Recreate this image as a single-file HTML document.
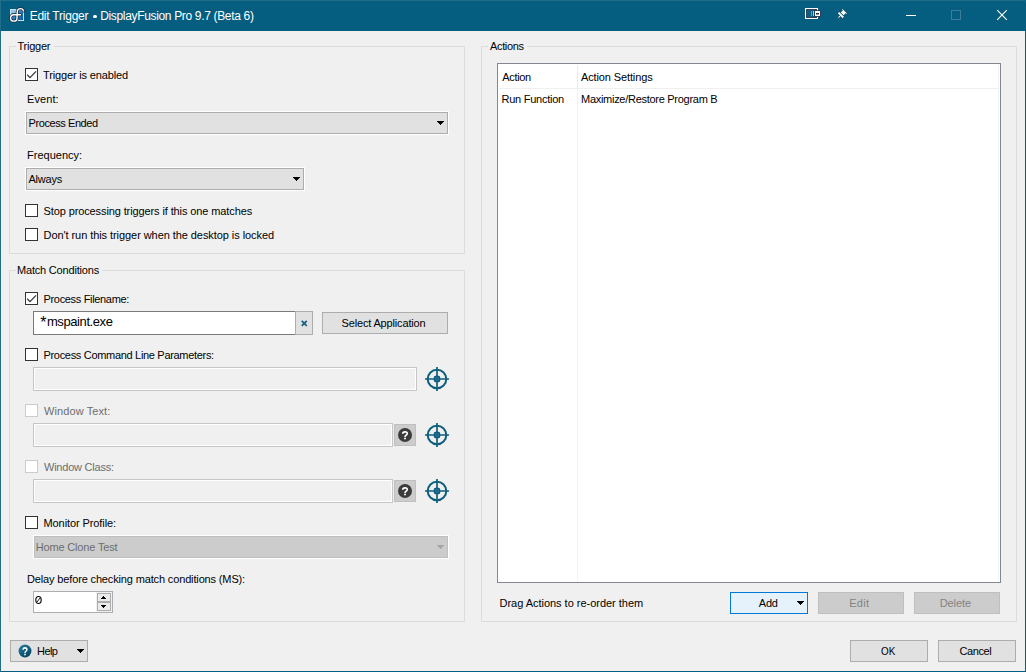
<!DOCTYPE html>
<html><head><meta charset="utf-8"><title>Edit Trigger</title>
<style>
*{box-sizing:border-box;margin:0;padding:0}
html,body{width:1026px;height:672px;overflow:hidden;background:#f0f0f0}
body{position:relative;font-family:"Liberation Sans",sans-serif;font-size:11px;color:#000;line-height:13px}
.a{position:absolute}
.t{position:absolute;white-space:pre;line-height:13px;height:13px}
.grp{position:absolute;border:1px solid #dcdcdc}
.gl{position:absolute;background:#f0f0f0;height:3px}
.cb{position:absolute;width:13px;height:13px;border:1px solid #333;background:#fff}
.cb.d{border-color:#cccccc;background:#fff}
.dd{position:absolute;border:1px solid #fff}
.dd>i{position:absolute;left:0;top:0;right:0;bottom:0;border:1px solid #adadad;background:#e1e1e1}
.dd.d>i{border-color:#bfbfbf;background:#cccccc}
.btn{position:absolute;border:1px solid #adadad;background:#e1e1e1}
.btn.d{border-color:#bfbfbf;background:#cccccc}
.btn.f{border-color:#0078d7;background:#e5f1fb}
.inp{position:absolute;border:1px solid #7a7a7a;background:#fff}
.inp.d{border:1px solid #c6c6c6;background:#f0f0f0;box-shadow:inset 0 0 0 1px #fff}
svg{position:absolute;overflow:visible}
</style></head>
<body>
<div class="a" style="left:0;top:0;width:1026px;height:31px;background:#055e80"></div>
<div class="a" style="left:0;top:0;width:1026px;height:1px;background:#1f6e8a"></div>
<div class="a" style="left:0;top:0;width:1px;height:671px;background:#1f6e8a"></div>
<div class="a" style="left:1025px;top:0;width:1px;height:672px;background:#055e80"></div>
<div class="a" style="left:0;top:671px;width:1026px;height:1px;background:#055e80"></div>
<div class="a" style="left:93.0px;top:14.8px;width:3.6px;height:3.6px;border-radius:50%;background:#fff"></div>
<div class="grp" style="left:9px;top:46px;width:456px;height:208px"></div>
<div class="gl" style="left:16px;top:45px;width:38px"></div>
<div class="grp" style="left:9px;top:270px;width:456px;height:352px"></div>
<div class="gl" style="left:16px;top:269px;width:86px"></div>
<div class="grp" style="left:481px;top:46px;width:536px;height:576px"></div>
<div class="gl" style="left:488px;top:45px;width:39px"></div>
<div class="cb" style="left:25px;top:68px"><svg width="13" height="13" viewBox="0 0 13 13" style="left:-1px;top:-1px"><path d="M2.2 6.8 L5 9.6 L11 3.4" fill="none" stroke="#333" stroke-width="1.25"/></svg></div>
<div class="cb" style="left:25px;top:204px"></div>
<div class="cb" style="left:25px;top:228px"></div>
<div class="cb" style="left:25px;top:292px"><svg width="13" height="13" viewBox="0 0 13 13" style="left:-1px;top:-1px"><path d="M2.2 6.8 L5 9.6 L11 3.4" fill="none" stroke="#333" stroke-width="1.25"/></svg></div>
<div class="cb" style="left:25px;top:348px"></div>
<div class="cb d" style="left:25px;top:404px"></div>
<div class="cb d" style="left:25px;top:460px"></div>
<div class="cb" style="left:25px;top:516px"></div>
<div class="dd" style="left:25px;top:111px;width:424px;height:24px"><i></i></div>
<svg width="7" height="4" style="left:437px;top:121px" shape-rendering="crispEdges"><path d="M0 0h7v1h-1v1h-1v1h-1v1h-1v-1h-1v-1h-1v-1h-1z" fill="#000"/></svg>
<div class="dd" style="left:25px;top:167px;width:280px;height:24px"><i></i></div>
<svg width="7" height="4" style="left:293px;top:177px" shape-rendering="crispEdges"><path d="M0 0h7v1h-1v1h-1v1h-1v1h-1v-1h-1v-1h-1v-1h-1z" fill="#000"/></svg>
<div class="dd d" style="left:33px;top:535px;width:416px;height:24px"><i></i></div>
<svg width="7" height="4" style="left:437px;top:545px" shape-rendering="crispEdges"><path d="M0 0h7v1h-1v1h-1v1h-1v1h-1v-1h-1v-1h-1v-1h-1z" fill="#a6a6a6"/></svg>
<div class="inp" style="left:33px;top:311px;width:263px;height:24px"></div>
<div class="btn" style="left:295px;top:311px;width:18px;height:24px"></div>
<svg width="7" height="7" viewBox="0 0 7 7" style="left:301px;top:320px"><path d="M0.75 0.8 L5.75 5.8 M5.75 0.8 L0.75 5.8" stroke="#1a5f80" stroke-width="1.75" fill="none"/></svg>
<div class="btn" style="left:322px;top:312px;width:126px;height:22px"></div>
<div class="inp d" style="left:33px;top:367px;width:384px;height:24px"></div>
<div class="inp d" style="left:33px;top:423px;width:360px;height:24px"></div>
<div class="inp d" style="left:33px;top:479px;width:360px;height:24px"></div>
<div class="btn d" style="left:394px;top:424px;width:22px;height:22px"></div>
<svg width="14" height="14" viewBox="0 0 14 14" style="left:398px;top:428px"><circle cx="7" cy="7" r="7" fill="#3c3c3c"/><path d="M4.75 5.7 C4.75 3.3 9.25 3.3 9.25 5.6 C9.25 7.2 7 7.1 7 8.9" fill="none" stroke="#fff" stroke-width="1.7"/><circle cx="7" cy="10.55" r="0.95" fill="#fff"/></svg>
<div class="btn d" style="left:394px;top:480px;width:22px;height:22px"></div>
<svg width="14" height="14" viewBox="0 0 14 14" style="left:398px;top:484px"><circle cx="7" cy="7" r="7" fill="#3c3c3c"/><path d="M4.75 5.7 C4.75 3.3 9.25 3.3 9.25 5.6 C9.25 7.2 7 7.1 7 8.9" fill="none" stroke="#fff" stroke-width="1.7"/><circle cx="7" cy="10.55" r="0.95" fill="#fff"/></svg>
<svg width="24" height="24" viewBox="0 0 24 24" style="left:425px;top:367px"><g fill="none" stroke="#0f5e7e" stroke-width="2"><circle cx="12" cy="12" r="9.3"/><path d="M0 12H24M12 0V24" stroke-width="1.7"/></g><rect x="8.8" y="8.8" width="6.4" height="6.4" rx="1.6" fill="#0f5e7e"/><rect x="10.4" y="10.4" width="3.2" height="3.2" fill="#3f86a3"/><path d="M12 10V14M10 12H14" stroke="#0f5e7e" stroke-width="0.9"/></svg>
<svg width="24" height="24" viewBox="0 0 24 24" style="left:425px;top:423px"><g fill="none" stroke="#0f5e7e" stroke-width="2"><circle cx="12" cy="12" r="9.3"/><path d="M0 12H24M12 0V24" stroke-width="1.7"/></g><rect x="8.8" y="8.8" width="6.4" height="6.4" rx="1.6" fill="#0f5e7e"/><rect x="10.4" y="10.4" width="3.2" height="3.2" fill="#3f86a3"/><path d="M12 10V14M10 12H14" stroke="#0f5e7e" stroke-width="0.9"/></svg>
<svg width="24" height="24" viewBox="0 0 24 24" style="left:425px;top:479px"><g fill="none" stroke="#0f5e7e" stroke-width="2"><circle cx="12" cy="12" r="9.3"/><path d="M0 12H24M12 0V24" stroke-width="1.7"/></g><rect x="8.8" y="8.8" width="6.4" height="6.4" rx="1.6" fill="#0f5e7e"/><rect x="10.4" y="10.4" width="3.2" height="3.2" fill="#3f86a3"/><path d="M12 10V14M10 12H14" stroke="#0f5e7e" stroke-width="0.9"/></svg>
<div class="inp"  style="border-color:#abadb3;left:33px;top:591px;width:80px;height:22px"></div>
<svg width="8" height="10" viewBox="34 595 8 10" style="left:34px;top:595px"><g fill="none" stroke="#000" stroke-width="1.1"><ellipse cx="38.5" cy="600" rx="2.7" ry="3.5"/><path d="M36.6 602.4 L40.4 597.6" stroke-width="0.9"/></g></svg>
<div class="a" style="left:96px;top:592px;width:16px;height:20px;background:#f0f0f0"></div>
<div class="btn" style="background:#ebebeb;left:97px;top:593px;width:14px;height:9px"></div>
<div class="btn" style="background:#ebebeb;left:97px;top:602px;width:14px;height:9px"></div>
<svg width="5" height="3" style="left:101px;top:596px" shape-rendering="crispEdges"><path d="M2 0h1v1h1v1h1v1h-5v-1h1v-1h1z" fill="#000"/></svg>
<svg width="5" height="3" style="left:101px;top:605px" shape-rendering="crispEdges"><path d="M0 0h5v1h-1v1h-1v1h-1v-1h-1v-1h-1z" fill="#000"/></svg>
<div class="btn" style="left:10px;top:640px;width:78px;height:22px"></div>
<svg width="14" height="14" viewBox="0 0 14 14" style="left:18px;top:644px"><defs><linearGradient id="hg" x1="0.2" y1="0" x2="0.8" y2="1"><stop offset="0" stop-color="#2b7c9e"/><stop offset="0.55" stop-color="#0f5a7a"/><stop offset="1" stop-color="#083f58"/></linearGradient></defs><circle cx="7" cy="7" r="6.45" fill="url(#hg)"/><g transform="translate(7 0) scale(0.86 1) translate(-7 0)"><path d="M4.75 5.7 C4.75 3.3 9.25 3.3 9.25 5.6 C9.25 7.2 7 7.1 7 8.9" fill="none" stroke="#fff" stroke-width="1.65"/><circle cx="7" cy="10.55" r="0.95" fill="#fff"/></g></svg>
<svg width="7" height="4" style="left:77px;top:649px" shape-rendering="crispEdges"><path d="M0 0h7v1h-1v1h-1v1h-1v1h-1v-1h-1v-1h-1v-1h-1z" fill="#000"/></svg>
<div class="a" style="left:497px;top:63px;width:504px;height:520px;border:1px solid #828790;background:#fff"></div>
<div class="a" style="left:499px;top:88px;width:500px;height:1px;background:#efefef"></div>
<div class="a" style="left:577px;top:65px;width:1px;height:23px;background:#ebebeb"></div>
<div class="a" style="left:998px;top:65px;width:1px;height:23px;background:#f1f1f1"></div>
<div class="a" style="left:998px;top:89px;width:1px;height:492px;background:#f0f5fd"></div>
<div class="a" style="left:577px;top:89px;width:1px;height:492px;background:#edf3fc"></div>
<div class="btn f" style="left:730px;top:592px;width:78px;height:22px"></div>
<svg width="7" height="4" style="left:797px;top:601px" shape-rendering="crispEdges"><path d="M0 0h7v1h-1v1h-1v1h-1v1h-1v-1h-1v-1h-1v-1h-1z" fill="#000"/></svg>
<div class="btn d" style="left:818px;top:592px;width:86px;height:22px"></div>
<div class="btn d" style="left:914px;top:592px;width:86px;height:22px"></div>
<div class="btn" style="left:850px;top:640px;width:78px;height:22px"></div>
<div class="btn" style="left:938px;top:640px;width:78px;height:22px"></div>
<span class="t" style="left:29.65px;top:10px;font-size:12px;letter-spacing:-0.224px;color:#fff;">Edit Trigger</span>
<span class="t" style="left:100.15px;top:10px;font-size:12px;letter-spacing:-0.333px;color:#fff;">DisplayFusion Pro 9.7 (Beta 6)</span>
<span class="t" style="left:17.50px;top:40px;font-size:11px;letter-spacing:-0.255px;color:#000;">Trigger</span>
<span class="t" style="left:17.00px;top:264px;font-size:11px;letter-spacing:-0.190px;color:#000;">Match Conditions</span>
<span class="t" style="left:490.00px;top:40px;font-size:11px;letter-spacing:-0.340px;color:#000;">Actions</span>
<span class="t" style="left:43.00px;top:69px;font-size:11px;letter-spacing:-0.147px;color:#000;">Trigger is enabled</span>
<span class="t" style="left:27.00px;top:93px;font-size:11px;letter-spacing:0.092px;color:#000;">Event:</span>
<span class="t" style="left:28.50px;top:117px;font-size:11px;letter-spacing:-0.413px;color:#000;">Process Ended</span>
<span class="t" style="left:27.00px;top:149px;font-size:11px;letter-spacing:0.013px;color:#000;">Frequency:</span>
<span class="t" style="left:28.50px;top:173px;font-size:11px;letter-spacing:-0.239px;color:#000;">Always</span>
<span class="t" style="left:43.50px;top:205px;font-size:11px;letter-spacing:-0.110px;color:#000;">Stop processing triggers if this one matches</span>
<span class="t" style="left:43.50px;top:229px;font-size:11px;letter-spacing:-0.067px;color:#000;">Don't run this trigger when the desktop is locked</span>
<span class="t" style="left:43.50px;top:293px;font-size:11px;letter-spacing:-0.329px;color:#000;">Process Filename:</span>
<span class="t" style="left:40.30px;top:316px;font-size:16px;letter-spacing:0.366px;color:#000;">*</span>
<span class="t" style="left:46.96px;top:315px;font-size:13px;letter-spacing:-0.414px;color:#000;">mspaint.exe</span>
<span class="t" style="left:341.50px;top:317px;font-size:11px;letter-spacing:-0.158px;color:#000;">Select Application</span>
<span class="t" style="left:43.50px;top:349px;font-size:11px;letter-spacing:-0.313px;color:#000;">Process Command Line Parameters:</span>
<span class="t" style="left:44.00px;top:405px;font-size:11px;letter-spacing:0.097px;color:#6d6d6d;">Window Text:</span>
<span class="t" style="left:44.00px;top:461px;font-size:11px;letter-spacing:-0.229px;color:#6d6d6d;">Window Class:</span>
<span class="t" style="left:43.50px;top:517px;font-size:11px;letter-spacing:-0.089px;color:#000;">Monitor Profile:</span>
<span class="t" style="left:35.65px;top:541px;font-size:11px;letter-spacing:-0.155px;color:#6d6d6d;">Home Clone Test</span>
<span class="t" style="left:27.00px;top:573px;font-size:11px;letter-spacing:-0.145px;color:#000;">Delay before checking match conditions (MS):</span>
<span class="t" style="left:37.00px;top:645px;font-size:11px;letter-spacing:-0.550px;color:#000;">Help</span>
<span class="t" style="left:502.24px;top:71px;font-size:11px;letter-spacing:-0.334px;color:#000;">Action</span>
<span class="t" style="left:581.00px;top:71px;font-size:11px;letter-spacing:-0.123px;color:#000;">Action Settings</span>
<span class="t" style="left:501.50px;top:93px;font-size:11px;letter-spacing:-0.253px;color:#000;">Run Function</span>
<span class="t" style="left:581.00px;top:93px;font-size:11px;letter-spacing:-0.280px;color:#000;">Maximize/Restore Program B</span>
<span class="t" style="left:499.50px;top:597px;font-size:11px;letter-spacing:-0.023px;color:#000;">Drag Actions to re-order them</span>
<span class="t" style="left:758.87px;top:597px;font-size:11px;letter-spacing:-0.279px;color:#000;">Add</span>
<span class="t" style="left:849.15px;top:597px;font-size:11px;letter-spacing:0.344px;color:#838383;">Edit</span>
<span class="t" style="left:939.65px;top:597px;font-size:11px;letter-spacing:-0.059px;color:#838383;">Delete</span>
<span class="t" style="left:880.75px;top:645px;font-size:11px;letter-spacing:0.000px;color:#000;transform:scaleX(0.896);transform-origin:0 0;">OK</span>
<span class="t" style="left:959.50px;top:645px;font-size:11px;letter-spacing:-0.420px;color:#000;">Cancel</span>
<!-- app icon -->
<svg width="18" height="18" viewBox="8 6 18 18" style="left:8px;top:6px">
<defs><linearGradient id="ag" x1="0" y1="0" x2="1" y2="1"><stop offset="0" stop-color="#8cc4ee"/><stop offset="0.45" stop-color="#2f86d2"/><stop offset="1" stop-color="#0d50a0"/></linearGradient></defs>
<rect x="10.5" y="9.5" width="13" height="11" fill="url(#ag)" stroke="#c4def2" stroke-width="1"/><rect x="11" y="10" width="5.5" height="3.2" fill="#b5dcf7" opacity="0.55"/>
<g fill="none" stroke-linecap="round" stroke-linejoin="round">
<path id="dfp" d="M23.3 11.0 C23.5 8.1 18.1 7.4 17.3 11.2 L17.0 17.9 A3.2 3.2 0 1 1 13.8 14.7 L20.6 14.7" stroke="#1c2530" stroke-width="2.9"/>
<path d="M23.3 11.0 C23.5 8.1 18.1 7.4 17.3 11.2 L17.0 17.9 A3.2 3.2 0 1 1 13.8 14.7 L20.6 14.7" stroke="#fff" stroke-width="1.4"/>
</g></svg>
<!-- monitor/window icon -->
<svg width="18" height="13" viewBox="804 7 18 13" style="left:804px;top:7px" shape-rendering="crispEdges">
<rect x="805" y="8" width="13" height="11" fill="#fff"/>
<rect x="806" y="9" width="11" height="9" fill="#3b3f58"/>
<rect x="807" y="10" width="9" height="7" fill="#0a5f80"/>
<rect x="811" y="11" width="1" height="5" fill="#5fa0bb"/><rect x="813" y="11" width="1" height="5" fill="#a9d0e0"/>
<rect x="814" y="10" width="7" height="7" fill="#2f3a55" opacity="0.85"/>
<rect x="815" y="11" width="5" height="5" fill="#fff"/>
<rect x="816" y="13" width="3" height="1.5" fill="#2a2f45" shape-rendering="auto"/>
</svg>
<!-- pin icon -->
<svg width="13" height="13" viewBox="836 7 13 13" style="left:836px;top:7px">
<g transform="translate(844.5 11.5) rotate(45)" fill="#fff" stroke="#0e3547" stroke-width="0.7" paint-order="stroke">
<rect x="-0.5" y="6" width="1" height="2.6"/>
<rect x="-3.1" y="-0.45" width="6.2" height="0.95"/>
<rect x="-2.0" y="-0.2" width="4.0" height="3.5"/>
<rect x="-3.4" y="4.15" width="6.8" height="1.9"/>
</g></svg>
<!-- caption buttons -->
<div class="a" style="left:906px;top:15px;width:10px;height:1px;background:#fff"></div>
<div class="a" style="left:951px;top:10px;width:10px;height:10px;border:1px solid #3c7d98"></div>
<svg width="10" height="10" viewBox="0 0 10 10" style="left:997px;top:10px"><path d="M0.2 0.2 L9.8 9.8 M9.8 0.2 L0.2 9.8" stroke="#fff" stroke-width="1.15" fill="none"/></svg>

</body></html>
